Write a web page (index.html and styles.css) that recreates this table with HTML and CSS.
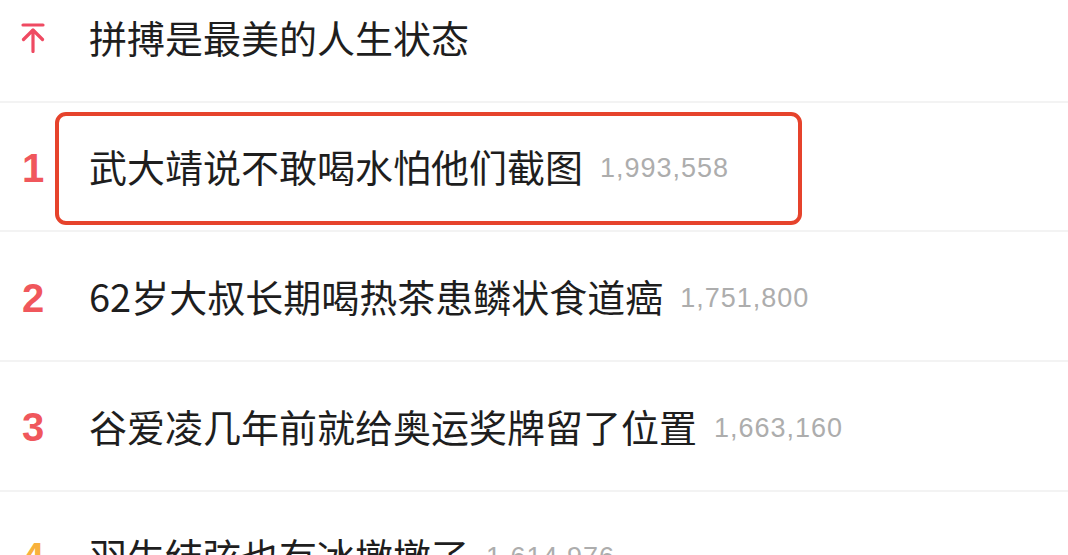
FILE: index.html
```html
<!DOCTYPE html>
<html lang="zh-CN">
<head>
    <meta charset="UTF-8">
    <meta name="viewport" content="width=device-width, initial-scale=1.0">
    <title>热搜榜</title>
    <link rel="stylesheet" href="styles.css">
</head>
<body>
    <ul class="hot-list">
        <li class="hot-item">
            <span class="rank">
                <svg class="top-icon" viewBox="0 0 24 30" width="24" height="30">
                    <path d="M2 2 H22 M12 28.5 V7 M2.5 16.5 L12 7 L21.5 16.5" fill="none" stroke="#ef4a62" stroke-width="3.2" stroke-linecap="round" stroke-linejoin="round"/>
                </svg>
            </span>
            <span class="title">拼搏是最美的人生状态</span>
        </li>
        <li class="hot-item">
            <span class="rank rank-hot">1</span>
            <span class="title">武大靖说不敢喝水怕他们截图</span>
            <span class="count">1,993,558</span>
            <div class="mark"></div>
        </li>
        <li class="hot-item">
            <span class="rank rank-hot">2</span>
            <span class="title">62岁大叔长期喝热茶患鳞状食道癌</span>
            <span class="count">1,751,800</span>
        </li>
        <li class="hot-item">
            <span class="rank rank-hot">3</span>
            <span class="title">谷爱凌几年前就给奥运奖牌留了位置</span>
            <span class="count">1,663,160</span>
        </li>
        <li class="hot-item">
            <span class="rank rank-warm">4</span>
            <span class="title">羽生结弦也有冰墩墩了</span>
            <span class="count">1,614,976</span>
        </li>
    </ul>
</body>
</html>
```

FILE: styles.css
```css
body {
    margin: 0;
    background-color: #fff;
    font-family: "Noto Sans CJK SC", "Liberation Sans", sans-serif;
    overflow: hidden;
}
.hot-list {
    list-style: none;
    margin: -27px 0 0;
    padding: 0;
}
.hot-item {
    position: relative;
    display: flex;
    align-items: center;
    height: 127.67px;
    border-bottom: 2px solid #f3f3f3;
}
.rank {
    width: 66px;
    flex-shrink: 0;
    display: flex;
    justify-content: center;
    padding-top: 3px;
    font-family: "Liberation Sans", Arial, sans-serif;
    font-weight: bold;
    font-size: 40px;
    line-height: 1;
}
.rank-hot {
    color: #f0575c;
}
.rank-warm {
    color: #f8b13c;
}
.top-icon {
    display: block;
}
.title {
    margin-left: 23px;
    font-size: 38px;
    line-height: 1;
    color: #1e1e1e;
}
.count {
    margin-left: 17px;
    padding-top: 5px;
    font-family: "Liberation Sans", Arial, sans-serif;
    font-size: 27px;
    letter-spacing: 1px;
    color: #adadad;
    line-height: 1;
}
.mark {
    position: absolute;
    left: 55px;
    top: 9px;
    width: 747px;
    height: 113px;
    box-sizing: border-box;
    border: 4px solid #e6432c;
    border-radius: 11px;
}
```
